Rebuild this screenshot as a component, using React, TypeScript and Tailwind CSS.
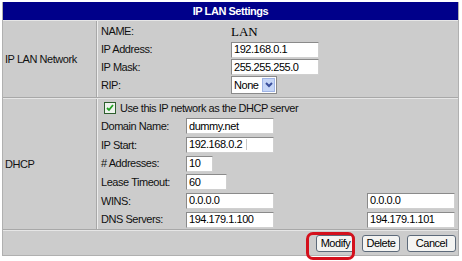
import React from 'react';

const font = { fontFamily: '"Liberation Sans", Arial, sans-serif' };

function Field({ value, w, caret }: { value: string; w: string; caret?: boolean }) {
  return (
    <div
      className={`${w} h-[16px] bg-white border border-t-[#8a8a8a] border-l-[#8a8a8a] border-b-[#d0d0d0] border-r-[#d0d0d0] flex items-center pl-[2px] text-[11px] text-black leading-none`}
    >
      {value}
      {caret && <span className="ml-[4px] w-px h-[11px] bg-[#c8c8c8]" />}
    </div>
  );
}

function Row({ label, children, lw }: { label: string; children: React.ReactNode; lw: string }) {
  return (
    <div className="flex items-center h-[19px]">
      <div className={`${lw} text-[11px] text-[#111]`}>{label}</div>
      {children}
    </div>
  );
}

export default function App() {
  return (
    <div className="w-[462px] h-[261px] bg-white pt-[2px] pl-[2px] tracking-[-0.45px]" style={font}>
      <div className="relative w-[457px] bg-[#cccccc] border-l border-r border-b border-[#b0b0b0]">
        {/* header */}
        <div className="h-[18px] bg-[#00008a] flex items-center justify-center text-white font-bold text-[11px]">
          IP LAN Settings
        </div>

        {/* IP LAN Network */}
        <div className="flex h-[78px] border-t border-[#e6e6e6] border-b border-b-[#a8a8a8]">
          <div className="w-[94px] flex items-center pl-[2px] text-[11px] text-[#111] border-r border-[#a8a8a8]">IP LAN Network</div>
          <div className="flex-1 flex flex-col pl-[3px] pt-[1px] border-l border-[#ececec]">
            <div className="flex items-center h-[18px]">
              <div className="w-[130px] text-[11px] text-[#111]">NAME:</div>
              <div className="text-[13px] text-black leading-none tracking-normal" style={{ fontFamily: '"Liberation Serif", serif' }}>LAN</div>
            </div>
            <Row label="IP Address:" lw="w-[130px]"><Field value="192.168.0.1" w="w-[88px]" /></Row>
            <div className="flex items-center h-[16px]">
              <div className="w-[130px] text-[11px] text-[#111]">IP Mask:</div>
              <Field value="255.255.255.0" w="w-[88px]" />
            </div>
            <div className="flex items-center h-[20px]">
              <div className="w-[130px] text-[11px] text-[#111]">RIP:</div>
              <div className="w-[46px] h-[18px] bg-white border border-[#8a8a8a] flex items-center justify-between pl-[2px] pr-[1px] text-[11px]">
                None
                <span className="w-[13px] h-[14px] bg-[#c6d6f7] border border-[#9fb4e6] flex items-center justify-center">
                  <svg width="8" height="6" viewBox="0 0 8 6">
                    <path d="M1 1 L4 4 L7 1" stroke="#3a4f9c" strokeWidth="2" fill="none" />
                  </svg>
                </span>
              </div>
            </div>
          </div>
        </div>

        {/* DHCP */}
        <div className="flex h-[132px] border-t border-[#e6e6e6] border-b border-b-[#a8a8a8]">
          <div className="w-[94px] flex items-center pl-[2px] text-[11px] text-[#111] border-r border-[#a8a8a8]">DHCP</div>
          <div className="flex-1 flex flex-col pl-[3px] pr-[3px] border-l border-[#ececec]">
            <div className="flex items-center h-[18px] pl-[3px] gap-[4px] text-[11px] text-[#111]">
              <span className="w-[12px] h-[12px] bg-[#eef3ee] border border-[#2e5e2e] flex items-center justify-center">
                <svg width="8" height="8" viewBox="0 0 8 8">
                  <path d="M1 4 L3 6 L7 1" stroke="#21a121" strokeWidth="1.8" fill="none" />
                </svg>
              </span>
              Use this IP network as the DHCP server
            </div>
            <Row label="Domain Name:" lw="w-[85px]"><Field value="dummy.net" w="w-[88px]" /></Row>
            <Row label="IP Start:" lw="w-[85px]"><Field value="192.168.0.2" w="w-[88px]" caret /></Row>
            <Row label="# Addresses:" lw="w-[85px]"><Field value="10" w="w-[27px]" /></Row>
            <Row label="Lease Timeout:" lw="w-[85px]"><Field value="60" w="w-[41px]" /></Row>
            <Row label="WINS:" lw="w-[85px]">
              <Field value="0.0.0.0" w="w-[88px]" />
              <div className="ml-auto"><Field value="0.0.0.0" w="w-[88px]" /></div>
            </Row>
            <Row label="DNS Servers:" lw="w-[85px]">
              <Field value="194.179.1.100" w="w-[88px]" />
              <div className="ml-auto"><Field value="194.179.1.101" w="w-[88px]" /></div>
            </Row>
          </div>
        </div>

        {/* buttons */}
        <div className="h-[25px] border-t border-[#e6e6e6] flex items-center justify-end gap-[7px] pr-[2px] text-[11px]">
          <button className="w-[39px] h-[17px] bg-[#f4f4f2] border border-[#5d6a7a] rounded-[3px] leading-none">Modify</button>
          <button className="w-[38px] h-[17px] bg-[#f4f4f2] border border-[#5d6a7a] rounded-[3px] leading-none">Delete</button>
          <button className="w-[49px] h-[17px] bg-[#f4f4f2] border border-[#5d6a7a] rounded-[3px] leading-none">Cancel</button>
        </div>

        {/* annotation */}
        <div className="absolute left-[303px] top-[230px] w-[49px] h-[28px] border-[3px] border-[#d4101c] rounded-[7px]" />
      </div>
    </div>
  );
}
